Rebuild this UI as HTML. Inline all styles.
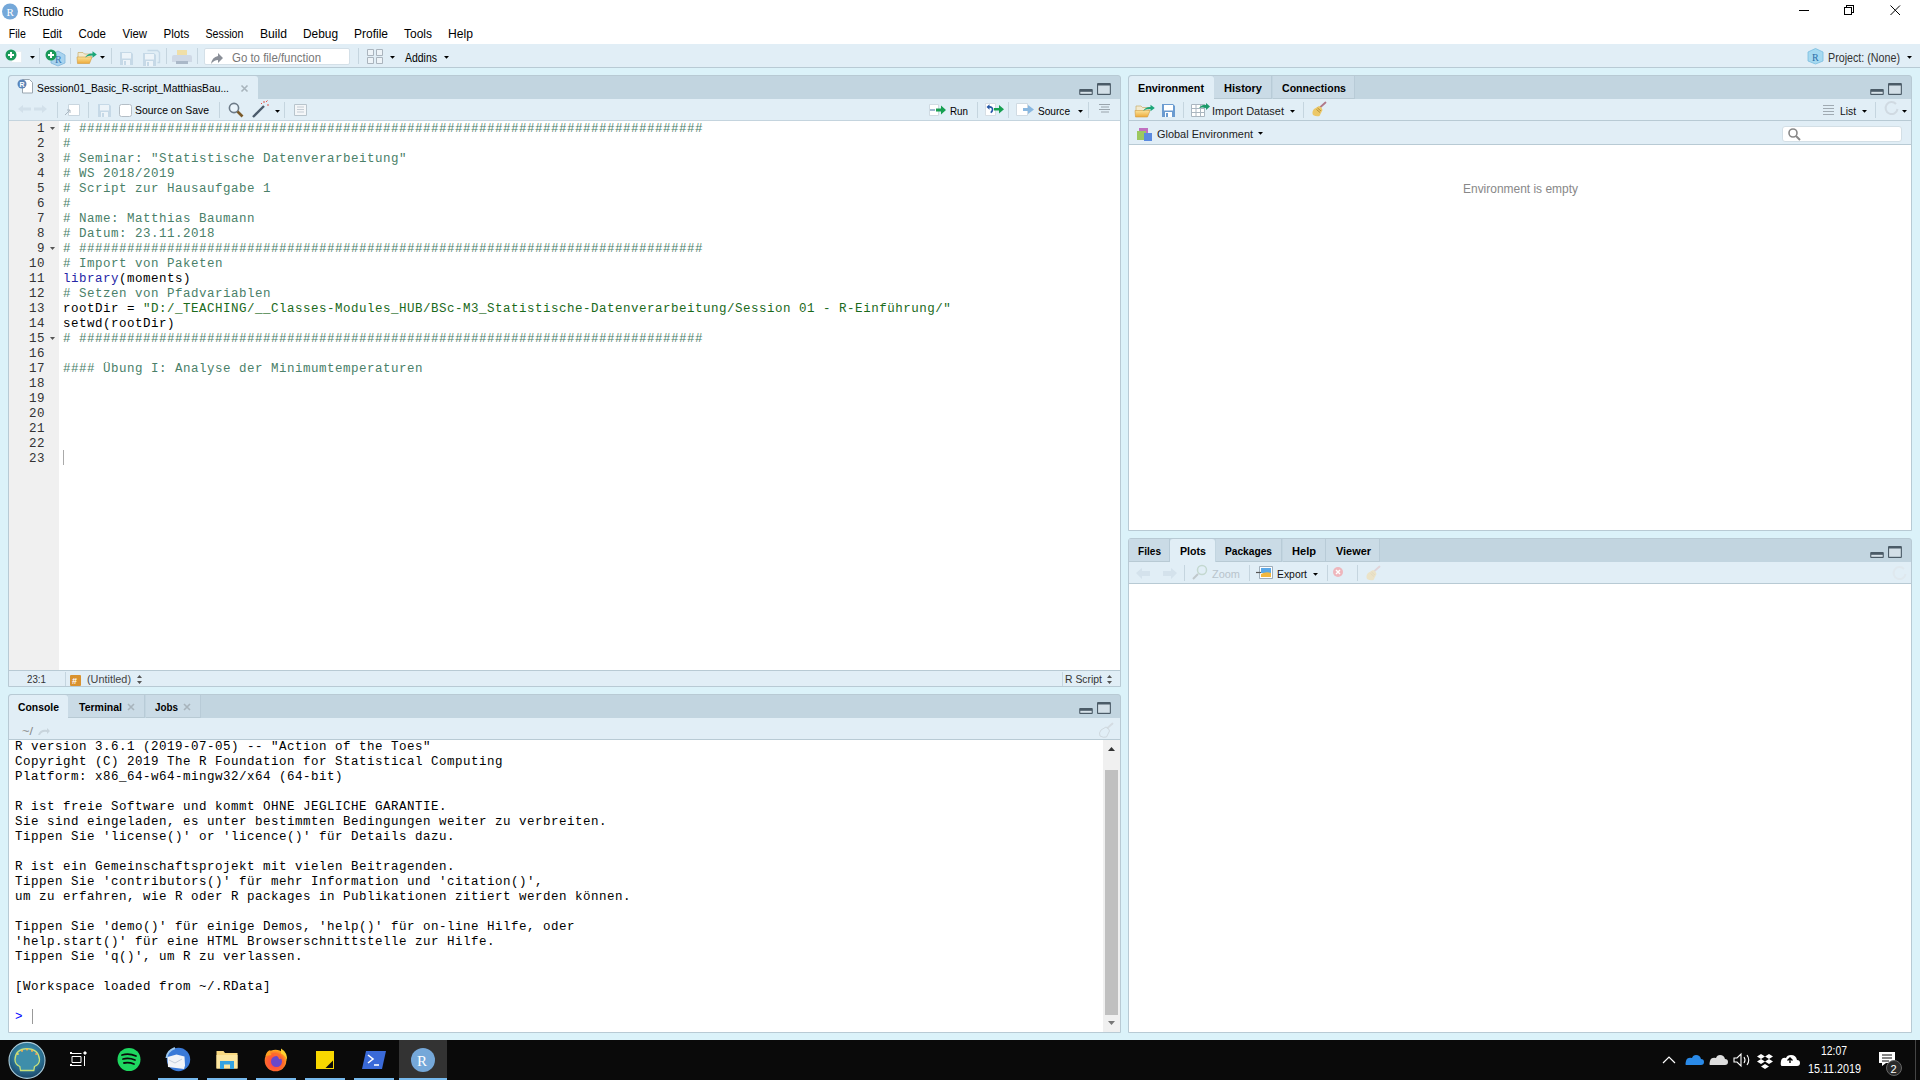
<!DOCTYPE html>
<html><head><meta charset="utf-8">
<style>
*{margin:0;padding:0;box-sizing:border-box}
html,body{width:1920px;height:1080px;overflow:hidden;background:#dbf2f9;font-family:"Liberation Sans",sans-serif;font-size:12px;color:#000}
.a{position:absolute}
.mono{font-family:"Liberation Mono",monospace;font-size:12.5px;letter-spacing:0.5px;line-height:15px;white-space:pre}
.cm{color:#4a7f69}
.st{color:#1b6a1b}
.fn{color:#2626a6}
svg{position:absolute;left:0;top:0}
</style></head><body>
<div class="a" style="left:0px;top:0px;width:1920px;height:44px;background:#fff;"></div>
<div class="a" style="left:0px;top:44px;width:1920px;height:24px;background:#e1eef6;border-bottom:1px solid #b8cad4"></div>
<div class="a" style="left:11px;top:51px;width:11px;height:12px;background:#fff;border:1px solid #e6eef3"></div>
<div class="a" style="left:39px;top:48px;width:1px;height:16px;background:#c5d5df;"></div>
<div class="a" style="left:70px;top:48px;width:1px;height:16px;background:#c5d5df;"></div>
<div class="a" style="left:111px;top:48px;width:1px;height:16px;background:#c5d5df;"></div>
<div class="a" style="left:166px;top:48px;width:1px;height:16px;background:#c5d5df;"></div>
<div class="a" style="left:197px;top:48px;width:1px;height:16px;background:#c5d5df;"></div>
<div class="a" style="left:204px;top:48px;width:146px;height:17px;background:#fff;border:1px solid #d4e0e8;border-radius:2px"></div>
<div class="a" style="left:358px;top:48px;width:1px;height:16px;background:#c5d5df;"></div>
<div class="a" style="left:8px;top:75px;width:1113px;height:612px;background:#c2d5e0;border:1px solid #b8cad4;border-radius:3px 3px 0 0"></div>
<div class="a" style="left:9px;top:76px;width:249px;height:23px;background:#e1eef6;border-radius:3px 3px 0 0"></div>
<div class="a" style="left:9px;top:99px;width:1111px;height:22px;background:#e1eef6;border-bottom:1px solid #c4d4de"></div>
<div class="a" style="left:57px;top:102px;width:1px;height:16px;background:#c5d5df;"></div>
<div class="a" style="left:88px;top:102px;width:1px;height:16px;background:#c5d5df;"></div>
<div class="a" style="left:119px;top:104px;width:13px;height:13px;background:#fff;border:1px solid #b4bec6;border-radius:2.5px"></div>
<div class="a" style="left:219px;top:102px;width:1px;height:16px;background:#c5d5df;"></div>
<div class="a" style="left:284px;top:102px;width:1px;height:16px;background:#c5d5df;"></div>
<div class="a" style="left:977px;top:102px;width:1px;height:16px;background:#c5d5df;"></div>
<div class="a" style="left:1008px;top:102px;width:1px;height:16px;background:#c5d5df;"></div>
<div class="a" style="left:1088px;top:102px;width:1px;height:16px;background:#c5d5df;"></div>
<div class="a" style="left:9px;top:121px;width:50px;height:549px;background:#f0f0f0;"></div>
<div class="a" style="left:59px;top:121px;width:1061px;height:549px;background:#fff;"></div>
<div class="a" style="left:9px;top:670px;width:1111px;height:16px;background:#e1eef6;border-top:1px solid #b8cad4"></div>
<div class="a" style="left:65px;top:672px;width:1px;height:14px;background:#c5d5df;"></div>
<div class="a" style="left:70px;top:675px;width:11px;height:11px;background:#d9922e;border-radius:1px"></div>
<div class="a" style="left:1062px;top:672px;width:1px;height:14px;background:#c5d5df;"></div>
<div class="a" style="left:8px;top:694px;width:1113px;height:339px;background:#c2d5e0;border:1px solid #b8cad4;border-radius:3px 3px 0 0"></div>
<div class="a" style="left:9px;top:695px;width:59px;height:23px;background:#e1eef6;border-radius:3px 3px 0 0"></div>
<div class="a" style="left:68px;top:695px;width:77px;height:23px;background:#cadbe6;border-right:1px solid #b8cbd7;border-bottom:1px solid #b8cad4"></div>
<div class="a" style="left:146px;top:695px;width:55px;height:23px;background:#cadbe6;border-right:1px solid #b8cbd7;border-bottom:1px solid #b8cad4"></div>
<div class="a" style="left:9px;top:718px;width:1111px;height:22px;background:#e1eef6;border-bottom:1px solid #b8cad4"></div>
<div class="a" style="left:9px;top:740px;width:1111px;height:292px;background:#fff;"></div>
<div class="a" style="left:1103px;top:740px;width:17px;height:292px;background:#f0f0f0;"></div>
<div class="a" style="left:1105px;top:770px;width:13px;height:245px;background:#c0c0c0;"></div>
<div class="a" style="left:1128px;top:75px;width:784px;height:456px;background:#c2d5e0;border:1px solid #b8cad4;border-radius:3px 3px 0 0"></div>
<div class="a" style="left:1129px;top:76px;width:85px;height:23px;background:#e1eef6;border-radius:3px 3px 0 0"></div>
<div class="a" style="left:1214px;top:76px;width:58px;height:23px;background:#cadbe6;border-right:1px solid #b8cbd7;border-bottom:1px solid #b8cad4"></div>
<div class="a" style="left:1273px;top:76px;width:82px;height:23px;background:#cadbe6;border-right:1px solid #b8cbd7;border-bottom:1px solid #b8cad4"></div>
<div class="a" style="left:1129px;top:99px;width:782px;height:22px;background:#e1eef6;border-bottom:1px solid #b8cad4"></div>
<div class="a" style="left:1183px;top:102px;width:1px;height:16px;background:#c5d5df;"></div>
<div class="a" style="left:1303px;top:102px;width:1px;height:16px;background:#c5d5df;"></div>
<div class="a" style="left:1875px;top:102px;width:1px;height:16px;background:#c5d5df;"></div>
<div class="a" style="left:1129px;top:121px;width:782px;height:24px;background:#e1eef6;border-bottom:1px solid #b8cad4"></div>
<div class="a" style="left:1782px;top:126px;width:120px;height:16px;background:#fff;border:1px solid #d3dfe6;border-radius:3px"></div>
<div class="a" style="left:1129px;top:145px;width:782px;height:385px;background:#fff;"></div>
<div class="a" style="left:1128px;top:538px;width:784px;height:495px;background:#c2d5e0;border:1px solid #b8cad4;border-radius:3px 3px 0 0"></div>
<div class="a" style="left:1129px;top:539px;width:41px;height:23px;background:#cadbe6;border-right:1px solid #b8cbd7;border-bottom:1px solid #b8cad4"></div>
<div class="a" style="left:1170px;top:539px;width:45px;height:23px;background:#e1eef6;border-radius:3px 3px 0 0"></div>
<div class="a" style="left:1216px;top:539px;width:66px;height:23px;background:#cadbe6;border-right:1px solid #b8cbd7;border-bottom:1px solid #b8cad4"></div>
<div class="a" style="left:1283px;top:539px;width:43px;height:23px;background:#cadbe6;border-right:1px solid #b8cbd7;border-bottom:1px solid #b8cad4"></div>
<div class="a" style="left:1326px;top:539px;width:54px;height:23px;background:#cadbe6;border-right:1px solid #b8cbd7;border-bottom:1px solid #b8cad4"></div>
<div class="a" style="left:1129px;top:562px;width:782px;height:22px;background:#e1eef6;border-bottom:1px solid #b8cad4"></div>
<div class="a" style="left:1184px;top:565px;width:1px;height:16px;background:#c5d5df;"></div>
<div class="a" style="left:1249px;top:565px;width:1px;height:16px;background:#c5d5df;"></div>
<div class="a" style="left:1327px;top:565px;width:1px;height:16px;background:#c5d5df;"></div>
<div class="a" style="left:1357px;top:565px;width:1px;height:16px;background:#c5d5df;"></div>
<div class="a" style="left:1129px;top:584px;width:782px;height:448px;background:#fff;"></div>
<div class="a" style="left:0px;top:1040px;width:1920px;height:40px;background:#0a0a0a;"></div>
<div class="a" style="left:316px;top:1051px;width:18px;height:18px;background:#f8d800;"></div>
<div class="a" style="left:399px;top:1040px;width:48px;height:40px;background:#333;"></div>
<div class="a" style="left:158px;top:1078px;width:40px;height:2px;background:#76b9ed;"></div>
<div class="a" style="left:207px;top:1078px;width:40px;height:2px;background:#76b9ed;"></div>
<div class="a" style="left:256px;top:1078px;width:40px;height:2px;background:#76b9ed;"></div>
<div class="a" style="left:305px;top:1078px;width:40px;height:2px;background:#76b9ed;"></div>
<div class="a" style="left:354px;top:1078px;width:40px;height:2px;background:#76b9ed;"></div>
<div class="a" style="left:399px;top:1078px;width:48px;height:2px;background:#76b9ed;"></div>
<div class="a" style="left:1915px;top:1040px;width:1px;height:40px;background:#444;"></div>
<div class="a mono" style="left:9px;top:122px;width:36px;text-align:right;color:#333">1
2
3
4
5
6
7
8
9
10
11
12
13
14
15
16
17
18
19
20
21
22
23</div>
<div class="a mono" style="left:63px;top:122px;color:#000"><span class="cm"># ##############################################################################</span>
<span class="cm">#</span>
<span class="cm"># Seminar: "Statistische Datenverarbeitung"</span>
<span class="cm"># WS 2018/2019</span>
<span class="cm"># Script zur Hausaufgabe 1</span>
<span class="cm">#</span>
<span class="cm"># Name: Matthias Baumann</span>
<span class="cm"># Datum: 23.11.2018</span>
<span class="cm"># ##############################################################################</span>
<span class="cm"># Import von Paketen</span>
<span class="fn">library</span>(moments)
<span class="cm"># Setzen von Pfadvariablen</span>
rootDir = <span class="st">"D:/_TEACHING/__Classes-Modules_HUB/BSc-M3_Statistische-Datenverarbeitung/Session 01 - R-Einführung/"</span>
setwd(rootDir)
<span class="cm"># ##############################################################################</span>

<span class="cm">#### Übung I: Analyse der Minimumtemperaturen</span></div>
<div class="a" style="left:63px;top:450px;width:1px;height:15px;background:#aaa"></div>
<div class="a mono" style="left:15px;top:740px;color:#000">R version 3.6.1 (2019-07-05) -- &quot;Action of the Toes&quot;
Copyright (C) 2019 The R Foundation for Statistical Computing
Platform: x86_64-w64-mingw32/x64 (64-bit)

R ist freie Software und kommt OHNE JEGLICHE GARANTIE.
Sie sind eingeladen, es unter bestimmten Bedingungen weiter zu verbreiten.
Tippen Sie &#x27;license()&#x27; or &#x27;licence()&#x27; für Details dazu.

R ist ein Gemeinschaftsprojekt mit vielen Beitragenden.
Tippen Sie &#x27;contributors()&#x27; für mehr Information und &#x27;citation()&#x27;,
um zu erfahren, wie R oder R packages in Publikationen zitiert werden können.

Tippen Sie &#x27;demo()&#x27; für einige Demos, &#x27;help()&#x27; für on-line Hilfe, oder
&#x27;help.start()&#x27; für eine HTML Browserschnittstelle zur Hilfe.
Tippen Sie &#x27;q()&#x27;, um R zu verlassen.

[Workspace loaded from ~/.RData]

<span style="color:#0000ff">&gt;</span> </div>
<div class="a" style="left:32px;top:1009px;width:1px;height:15px;background:#999"></div>
<svg width="1920" height="1080" viewBox="0 0 1920 1080">
<circle cx="10" cy="11.5" r="8" fill="#75a8d9"/>
<text x="6.5" y="15.5" font-family="Liberation Serif" font-size="11" fill="#fff">R</text>
<text x="23.5" y="15.8" font-family="Liberation Sans" font-size="12.6" font-weight="normal" fill="#000" textLength="40.00" lengthAdjust="spacingAndGlyphs">RStudio</text>
<path d="M1799 10.5h10" stroke="#000" stroke-width="1" shape-rendering="crispEdges"/>
<path d="M1844.5 7.5h7v7h-7z M1846.5 7.5v-2h7v7h-2" stroke="#000" stroke-width="1" fill="none" shape-rendering="crispEdges"/>
<path d="M1890.5 5.5l9.5 9.5 M1900 5.5l-9.5 9.5" stroke="#000" stroke-width="1"/>
<text x="8.8" y="37.5" font-family="Liberation Sans" font-size="12.2" font-weight="normal" fill="#000" textLength="17.00" lengthAdjust="spacingAndGlyphs">File</text>
<text x="42.5" y="37.5" font-family="Liberation Sans" font-size="12.2" font-weight="normal" fill="#000" textLength="19.50" lengthAdjust="spacingAndGlyphs">Edit</text>
<text x="78.5" y="37.5" font-family="Liberation Sans" font-size="12.2" font-weight="normal" fill="#000" textLength="27.50" lengthAdjust="spacingAndGlyphs">Code</text>
<text x="122.5" y="37.5" font-family="Liberation Sans" font-size="12.2" font-weight="normal" fill="#000" textLength="24.50" lengthAdjust="spacingAndGlyphs">View</text>
<text x="163.4" y="37.5" font-family="Liberation Sans" font-size="12.2" font-weight="normal" fill="#000" textLength="25.80" lengthAdjust="spacingAndGlyphs">Plots</text>
<text x="205.5" y="37.5" font-family="Liberation Sans" font-size="12.2" font-weight="normal" fill="#000" textLength="38.00" lengthAdjust="spacingAndGlyphs">Session</text>
<text x="260" y="37.5" font-family="Liberation Sans" font-size="12.2" font-weight="normal" fill="#000" textLength="27.00" lengthAdjust="spacingAndGlyphs">Build</text>
<text x="303" y="37.5" font-family="Liberation Sans" font-size="12.2" font-weight="normal" fill="#000" textLength="35.00" lengthAdjust="spacingAndGlyphs">Debug</text>
<text x="354" y="37.5" font-family="Liberation Sans" font-size="12.2" font-weight="normal" fill="#000" textLength="34.00" lengthAdjust="spacingAndGlyphs">Profile</text>
<text x="404" y="37.5" font-family="Liberation Sans" font-size="12.2" font-weight="normal" fill="#000" textLength="28.00" lengthAdjust="spacingAndGlyphs">Tools</text>
<text x="448" y="37.5" font-family="Liberation Sans" font-size="12.2" font-weight="normal" fill="#000" textLength="25.00" lengthAdjust="spacingAndGlyphs">Help</text>
<circle cx="11" cy="55" r="5.5" fill="#1a9a5a"/><path d="M8 55h6M11 52v6" stroke="#fff" stroke-width="2"/>
<path d="M30 56h5l-2.5 2.75z" fill="#000"/>
<path d="M51 55l7-4 7 4v8l-7 3-7-3z" fill="#a9d3ef" stroke="#7fb5da" stroke-width="0.8"/>
<text x="55" y="63" font-family="Liberation Serif" font-size="10" fill="#3a76b0">R</text>
<circle cx="51" cy="55" r="5.5" fill="#1a9a5a"/><path d="M48 55h6M51 52v6" stroke="#fff" stroke-width="2"/>
<defs><linearGradient id="fg77" x1="0" y1="0" x2="0" y2="1"><stop offset="0" stop-color="#fae39a"/><stop offset="1" stop-color="#eeaa3a"/></linearGradient></defs>
<path d="M78 52.5h5l1.5 1.5h6.5v5h-13z" fill="#f2ead0" stroke="#c9ad6a" stroke-width="0.7"/>
<path d="M77 57h15l-2.5 6.5h-12z" fill="url(#fg77)" stroke="#d09a40" stroke-width="0.6"/>
<path d="M85 57.5q3-4.5 7.5-4v-2.3l4.3 3.3-4.3 3.3v-2.3q-4.5-0.3-7.5 2z" fill="#1ba678"/>
<path d="M100 56h5l-2.5 2.75z" fill="#000"/>
<path d="M120 52h11l2 2v11h-13z" fill="#c6d9e7"/><path d="M122 53h9v5.5h-9z M123 60h7v5h-7z" fill="#edf4f9"/><path d="M124 61h2v4h-2z" fill="#c6d9e7"/>
<path d="M147.5 50.5h10l2 2v10h-2" fill="none" stroke="#c6d9e7" stroke-width="1.4"/>
<path d="M143 53h11l2 2v11h-13z" fill="#c6d9e7"/><path d="M145 54h9v5.5h-9z M146 61h7v5h-7z" fill="#edf4f9"/><path d="M147 62h2v4h-2z" fill="#c6d9e7"/>
<path d="M177 50h10v5h-10z" fill="#f0dfa8"/><path d="M174 55h16q2 0 2 2v5h-20v-5q0-2 2-2z" fill="#cfd9e6"/><path d="M176 61h12v3h-12z" fill="#aab8c8"/>
<path d="M211 64q1-7 7-8v-3l5 5-5 5v-3q-4 0-7 4z" fill="#8a8f98"/>
<text x="232" y="62.3" font-family="Liberation Sans" font-size="12" font-weight="normal" fill="#777" textLength="89.00" lengthAdjust="spacingAndGlyphs">Go to file/function</text>
<path d="M367.5 49.5h6v6h-6z M376.5 49.5h6v6h-6z M367.5 57.5h6v6h-6z M376.5 57.5h6v6h-6z" stroke="#aab4bd" fill="#eef4f8"/>
<path d="M390 56h5l-2.5 2.75z" fill="#000"/>
<text x="405" y="62.3" font-family="Liberation Sans" font-size="12" font-weight="normal" fill="#000" textLength="32.00" lengthAdjust="spacingAndGlyphs">Addins</text>
<path d="M444 56h5l-2.5 2.75z" fill="#000"/>
<path d="M1808 52l7.5-3.5 7.5 3.5v9l-7.5 3-7.5-3z" fill="#a6d9f0" stroke="#78bde0" stroke-width="0.8"/>
<text x="1812" y="61" font-family="Liberation Serif" font-size="10" fill="#2a6ea8">R</text>
<text x="1828" y="61.5" font-family="Liberation Sans" font-size="12" font-weight="normal" fill="#333" textLength="72.00" lengthAdjust="spacingAndGlyphs">Project: (None)</text>
<path d="M1907 56h5l-2.5 2.75z" fill="#000"/>
<rect x="1079.2" y="89.1" width="13.6" height="5.8" rx="1" fill="#4b5b67"/><rect x="1080.3" y="91.8" width="11.4" height="2" fill="#d8e3ea"/>
<rect x="1097.0" y="82.9" width="13.9" height="12" rx="1" fill="#4b5b67"/><rect x="1098.1" y="85.5" width="11.7" height="8.3" fill="#d3dfe7"/>
<text x="37" y="92" font-family="Liberation Sans" font-size="11.6" font-weight="normal" fill="#000" textLength="192.00" lengthAdjust="spacingAndGlyphs">Session01_Basic_R-script_MatthiasBau...</text>
<path d="M241.5 85.5l6 6 M247.5 85.5l-6 6" stroke="#a8b4bc" stroke-width="1.6"/>
<path d="M22.5 79.5h7l3 3v10.5h-10z" fill="#fff" stroke="#9aa6b0"/>
<circle cx="22" cy="84" r="4.5" fill="#5a84b8"/><text x="19.5" y="87" font-family="Liberation Sans" font-weight="bold" font-size="7" fill="#fff">R</text>
<path d="M18 109l5-4v2.5h8v3h-8v2.5z M47 109l-5-4v2.5h-8v3h8v2.5z" fill="#d2e0ea"/>
<path d="M68.5 104.5h11v11h-11z" fill="#fff" stroke="#c9d6df"/><path d="M65 115l5-5m-3 0h3v3" stroke="#aab7c2" fill="none"/>
<path d="M98 104h11l2 2v11h-13z" fill="#c6d9e7"/><path d="M100 105h9v5.5h-9z M101 112h7v5h-7z" fill="#edf4f9"/><path d="M102 113h2v4h-2z" fill="#c6d9e7"/>
<text x="135" y="114" font-family="Liberation Sans" font-size="11.6" font-weight="normal" fill="#000" textLength="74.00" lengthAdjust="spacingAndGlyphs">Source on Save</text>
<circle cx="234" cy="108" r="4.6" fill="#eaf4fb" stroke="#6d7b88" stroke-width="1.6"/><path d="M237.5 111.5l5 5" stroke="#7a5a2a" stroke-width="2.6"/>
<path d="M253 117l11-11" stroke="#4a5a6a" stroke-width="2.4"/><path d="M264 103v-2 M267 105h2 M266 102l1.5-1.5 M262 104l-1-1" stroke="#e0554a" stroke-width="1"/>
<path d="M275 110h5l-2.5 2.75z" fill="#000"/>
<path d="M294.5 104.5h12v11h-12z" fill="#f4f6f8" stroke="#b8c4cc"/><path d="M297 107h7M297 109.5h7M297 112h7" stroke="#c4ccd4"/>
<path d="M929.5 104.5h9v11h-9z" fill="#fff" stroke="#d0dbe3"/><path d="M930 110h5" stroke="#9fb8d0" stroke-width="2"/><path d="M936 108.5h5v-3l5 4.5-5 4.5v-3h-5z" fill="#16a050"/>
<text x="950" y="114.5" font-family="Liberation Sans" font-size="11.6" font-weight="normal" fill="#000" textLength="18.00" lengthAdjust="spacingAndGlyphs">Run</text>
<path d="M985.5 103.5h10v12h-10z" fill="#fff" stroke="#d6dee4"/><path d="M989 107q3.8-0.3 3.5 2.8q-0.3 1.8-1.8 2.8" stroke="#2456a6" stroke-width="1.7" fill="none"/><path d="M986.5 107l3-2.8v5.6z" fill="#2456a6"/><path d="M994 108h5v-3l5 4.2-5 4.3v-3h-5z" fill="#16a050"/>
<path d="M1016.5 103.5h11v12h-11z" fill="#fff" stroke="#d0dbe3"/><path d="M1023 108h5v-3l6 4.5-6 4.5v-3h-5z" fill="#8ab8e0"/>
<text x="1038" y="114.5" font-family="Liberation Sans" font-size="11.6" font-weight="normal" fill="#000" textLength="32.00" lengthAdjust="spacingAndGlyphs">Source</text>
<path d="M1078 110h5l-2.5 2.75z" fill="#000"/>
<path d="M1099 104.5h11 M1101 107h8 M1099 109.5h11 M1101 112h8" stroke="#9aa4ac"/>
<text x="27" y="683" font-family="Liberation Sans" font-size="11.6" font-weight="normal" fill="#333" textLength="19.00" lengthAdjust="spacingAndGlyphs">23:1</text>
<text x="72" y="684" font-family="Liberation Sans" font-size="9" font-weight="bold" fill="#fff">#</text>
<text x="87" y="683" font-family="Liberation Sans" font-size="11.6" font-weight="normal" fill="#444" textLength="44.00" lengthAdjust="spacingAndGlyphs">(Untitled)</text>
<path d="M137 678l2.5-3 2.5 3z M137 681l2.5 3 2.5-3z" fill="#555"/>
<text x="1065" y="683" font-family="Liberation Sans" font-size="11.6" font-weight="normal" fill="#333" textLength="37.00" lengthAdjust="spacingAndGlyphs">R Script</text>
<path d="M1107 678l2.5-3 2.5 3z M1107 681l2.5 3 2.5-3z" fill="#555"/>
<text x="18" y="711" font-family="Liberation Sans" font-size="11.6" font-weight="bold" fill="#000" textLength="41.00" lengthAdjust="spacingAndGlyphs">Console</text>
<text x="79" y="711" font-family="Liberation Sans" font-size="11.6" font-weight="bold" fill="#000" textLength="43.00" lengthAdjust="spacingAndGlyphs">Terminal</text>
<path d="M128 704l6 6 M134 704l-6 6" stroke="#a8b4bc" stroke-width="1.6"/>
<text x="155" y="711" font-family="Liberation Sans" font-size="11.6" font-weight="bold" fill="#000" textLength="23.00" lengthAdjust="spacingAndGlyphs">Jobs</text>
<path d="M184 704l6 6 M190 704l-6 6" stroke="#a8b4bc" stroke-width="1.6"/>
<rect x="1079.2" y="708.1" width="13.6" height="5.8" rx="1" fill="#4b5b67"/><rect x="1080.3" y="710.8" width="11.4" height="2" fill="#d8e3ea"/>
<rect x="1097.0" y="701.9" width="13.9" height="12" rx="1" fill="#4b5b67"/><rect x="1098.1" y="704.5" width="11.7" height="8.3" fill="#d3dfe7"/>
<text x="22" y="735" font-family="Liberation Sans" font-size="11" font-weight="normal" fill="#888" textLength="11.00" lengthAdjust="spacingAndGlyphs">~/</text>
<path d="M38 735q2-6 9-5v-2l3 3-3 3v-2q-5-1-7 3z" fill="#c8d4dc"/>
<path d="M1112.5 723.5L1107.5 728" stroke="#d4dce2" stroke-width="1.8" stroke-linecap="round"/>
<path d="M1106 727q3 1 3.5 4l-3 6q-3 1-6.5-1q-1.5-3 1-6z" fill="none" stroke="#cfd8de" stroke-width="1"/>
<path d="M1108 751h7l-3.5-4z" fill="#333"/>
<path d="M1108 1021h7l-3.5 4z" fill="#777"/>
<text x="1138" y="92" font-family="Liberation Sans" font-size="11.6" font-weight="bold" fill="#000" textLength="66.00" lengthAdjust="spacingAndGlyphs">Environment</text>
<text x="1224" y="92" font-family="Liberation Sans" font-size="11.6" font-weight="bold" fill="#000" textLength="38.00" lengthAdjust="spacingAndGlyphs">History</text>
<text x="1282" y="92" font-family="Liberation Sans" font-size="11.6" font-weight="bold" fill="#000" textLength="64.00" lengthAdjust="spacingAndGlyphs">Connections</text>
<rect x="1870.2" y="89.1" width="13.6" height="5.8" rx="1" fill="#4b5b67"/><rect x="1871.3" y="91.8" width="11.4" height="2" fill="#d8e3ea"/>
<rect x="1888.0" y="82.9" width="13.9" height="12" rx="1" fill="#4b5b67"/><rect x="1889.1" y="85.5" width="11.7" height="8.3" fill="#d3dfe7"/>
<defs><linearGradient id="fg1135" x1="0" y1="0" x2="0" y2="1"><stop offset="0" stop-color="#fae39a"/><stop offset="1" stop-color="#eeaa3a"/></linearGradient></defs>
<path d="M1136 106.0h5l1.5 1.5h6.5v5h-13z" fill="#f2ead0" stroke="#c9ad6a" stroke-width="0.7"/>
<path d="M1135 110.5h15l-2.5 6.5h-12z" fill="url(#fg1135)" stroke="#d09a40" stroke-width="0.6"/>
<path d="M1143 111.0q3-4.5 7.5-4v-2.3l4.3 3.3-4.3 3.3v-2.3q-4.5-0.3-7.5 2z" fill="#1ba678"/>
<path d="M1162 104h11l2 2v11h-13z" fill="#6b9bd0"/><path d="M1164 105h9v5.5h-9z M1165 112h7v5h-7z" fill="#fff"/><path d="M1166 113h2v4h-2z" fill="#6b9bd0"/>
<path d="M1191.5 104.5h13v12h-13z M1191.5 108.5h13 M1191.5 112.5h13 M1196 104.5v12 M1200.5 104.5v12" stroke="#aab6c0" fill="#fff"/>
<path d="M1199 108q3-4 7-3v-2l4 3.5-4 3.5v-2q-4-1-7 0z" fill="#1c9a6a"/>
<text x="1212" y="114.5" font-family="Liberation Sans" font-size="11.6" font-weight="normal" fill="#222" textLength="72.00" lengthAdjust="spacingAndGlyphs">Import Dataset</text>
<path d="M1290 110h5l-2.5 2.75z" fill="#000"/>
<path d="M1325.5 102.5L1320.5 107" stroke="#b07888" stroke-width="1.8" stroke-linecap="round"/>
<path d="M1319 106q3 1 3.5 4l-3 6q-3 1-6.5-1q-1.5-3 1-6z" fill="#ecc868"/>
<path d="M1317.5 108l3.5 3 M1316.5 109.5l3.5 3" stroke="#b08a30" stroke-width="0.9"/>
<path d="M1823 105.5h11 M1823 108.5h11 M1823 111.5h11 M1823 114.5h11" stroke="#a0aab2"/>
<text x="1840" y="114.5" font-family="Liberation Sans" font-size="11.6" font-weight="normal" fill="#111" textLength="16.00" lengthAdjust="spacingAndGlyphs">List</text>
<path d="M1862 110h5l-2.5 2.75z" fill="#000"/>
<path d="M1896 104a6 6 0 1 0 1.5 5" fill="none" stroke="#d0dae2" stroke-width="2"/>
<path d="M1902 110h5l-2.5 2.75z" fill="#000"/>
<path d="M1139 128h9v9h-9z" fill="#c070c0"/><path d="M1137 131h9v9h-9z" fill="#9cc860"/><path d="M1144 133h8v8h-8z" fill="#5a8ae0"/>
<text x="1157" y="137.5" font-family="Liberation Sans" font-size="11.6" font-weight="normal" fill="#222" textLength="96.00" lengthAdjust="spacingAndGlyphs">Global Environment</text>
<path d="M1258 132h5l-2.5 2.75z" fill="#000"/>
<circle cx="1793" cy="133" r="4" fill="none" stroke="#888" stroke-width="1.6"/><path d="M1796 136l4 4" stroke="#888" stroke-width="2"/>
<text x="1463" y="193" font-family="Liberation Sans" font-size="12" font-weight="normal" fill="#888" textLength="115.00" lengthAdjust="spacingAndGlyphs">Environment is empty</text>
<text x="1138" y="555" font-family="Liberation Sans" font-size="11.6" font-weight="bold" fill="#000" textLength="23.00" lengthAdjust="spacingAndGlyphs">Files</text>
<text x="1180" y="555" font-family="Liberation Sans" font-size="11.6" font-weight="bold" fill="#000" textLength="26.00" lengthAdjust="spacingAndGlyphs">Plots</text>
<text x="1225" y="555" font-family="Liberation Sans" font-size="11.6" font-weight="bold" fill="#000" textLength="47.00" lengthAdjust="spacingAndGlyphs">Packages</text>
<text x="1292" y="555" font-family="Liberation Sans" font-size="11.6" font-weight="bold" fill="#000" textLength="24.00" lengthAdjust="spacingAndGlyphs">Help</text>
<text x="1336" y="555" font-family="Liberation Sans" font-size="11.6" font-weight="bold" fill="#000" textLength="35.00" lengthAdjust="spacingAndGlyphs">Viewer</text>
<rect x="1870.2" y="552.1" width="13.6" height="5.8" rx="1" fill="#4b5b67"/><rect x="1871.3" y="554.8" width="11.4" height="2" fill="#d8e3ea"/>
<rect x="1888.0" y="545.9" width="13.9" height="12" rx="1" fill="#4b5b67"/><rect x="1889.1" y="548.5" width="11.7" height="8.3" fill="#d3dfe7"/>
<path d="M1136 573l6-5v3h8v5h-8v3z M1177 573l-6-5v3h-8v5h8v3z" fill="#d4e2ec"/>
<circle cx="1202" cy="570" r="4.5" fill="none" stroke="#c4d8d0" stroke-width="1.5"/><path d="M1198 574l-5 5" stroke="#c0c8cc" stroke-width="2"/>
<text x="1212" y="578" font-family="Liberation Sans" font-size="11.6" font-weight="normal" fill="#b8c4cc" textLength="28.00" lengthAdjust="spacingAndGlyphs">Zoom</text>
<path d="M1259.5 566.5h13v12h-13z" fill="#fff" stroke="#8a9aa8" stroke-width="0.8"/><path d="M1261 568h10v5h-10z" fill="#5aa8e8"/><path d="M1261 574q5-3 10-1v4h-10z" fill="#f2b840"/><path d="M1256 572.5h5" stroke="#555" stroke-width="1.2"/>
<text x="1277" y="578" font-family="Liberation Sans" font-size="11.6" font-weight="normal" fill="#111" textLength="30.00" lengthAdjust="spacingAndGlyphs">Export</text>
<path d="M1313 573h5l-2.5 2.75z" fill="#000"/>
<circle cx="1338" cy="572" r="5" fill="#eeb6bc"/><path d="M1336 570l4 4M1340 570l-4 4" stroke="#fff" stroke-width="1.4"/>
<path d="M1379.5 566.5L1374.5 571" stroke="#e0d4d8" stroke-width="1.8" stroke-linecap="round"/>
<path d="M1373 570q3 1 3.5 4l-3 6q-3 1-6.5-1q-1.5-3 1-6z" fill="#ebe3c8"/>
<path d="M1371.5 572l3.5 3 M1370.5 573.5l3.5 3" stroke="#e2d8c0" stroke-width="0.9"/>
<path d="M1904 569a6 6 0 1 0 1.5 5" fill="none" stroke="#dfe8ee" stroke-width="2"/>
<defs><radialGradient id="shg" cx="0.5" cy="0.35" r="0.7"><stop offset="0" stop-color="#4aa0b8"/><stop offset="0.6" stop-color="#2a6e90"/><stop offset="1" stop-color="#173e60"/></radialGradient><radialGradient id="ffg" cx="0.45" cy="0.6" r="0.6"><stop offset="0" stop-color="#ff3a50"/><stop offset="0.7" stop-color="#ff6a2a"/><stop offset="1" stop-color="#ffb020"/></radialGradient></defs>
<circle cx="27" cy="1060.4" r="18" fill="url(#shg)" stroke="#a9cbd9" stroke-width="1.1"/>
<path d="M20.5 1070.5L19.8 1066.5Q15 1064.5 15 1059.5Q15.5 1049 27 1048.7Q38.5 1049 39.5 1059.5Q39.5 1064.5 34.5 1066.5L33.8 1070.5Z" fill="#3e8eaa" stroke="#c9e27a" stroke-width="1.3"/>
<circle cx="22" cy="1050.8" r="1.1" fill="#f0b050"/><circle cx="27" cy="1049.5" r="1.1" fill="#f0b050"/><circle cx="32" cy="1050.8" r="1.1" fill="#f0b050"/><circle cx="17.8" cy="1054" r="1.1" fill="#e8d060"/><circle cx="36.2" cy="1054" r="1.1" fill="#f09a60"/>
<path d="M70 1052h2v2h-2z M70 1066h2v-2h-2z" fill="#fff"/><path d="M70.5 1053.5h11 M70.5 1065.5h11 M72 1056.5h9v6h-9z" stroke="#fff" fill="none"/><path d="M84 1052h2v2h-2z M84.5 1056v10" stroke="#fff" fill="#fff"/>
<circle cx="129" cy="1059.5" r="11.5" fill="#1ed760"/><path d="M122 1055q7-2 14 1 M123 1059q6-1.5 12 1 M124 1063q5-1 10 1" stroke="#0a0a0a" stroke-width="1.8" fill="none" stroke-linecap="round"/>
<circle cx="178.5" cy="1059.5" r="11.7" fill="#3a7ad8"/><path d="M175 1048q-8 3-8.5 10" stroke="#9cc8f0" stroke-width="2" fill="none"/>
<path d="M167.5 1057l9-2.5 8 2 0.5 9-1 3.5-16-2z" fill="#f2f4f8"/><path d="M169 1060l6 3 7-4" stroke="#b8c4d4" stroke-width="0.8" fill="none"/>
<path d="M216.5 1051h7l1.5 2h12.5v15.5h-21z" fill="#f8d880"/><path d="M216.5 1055h21v13.5h-21z" fill="#fce6a0"/><path d="M220 1061h14v8h-4v-4.5h-6v4.5h-4z" fill="#35a3e2"/>
<circle cx="275.5" cy="1060.5" r="10.8" fill="url(#ffg)"/><circle cx="276.5" cy="1061.5" r="5.5" fill="#6a48c8"/><path d="M274 1055q5-1 6 4" stroke="#ff6a30" stroke-width="2" fill="none"/>
<path d="M281 1048.5q7 4 6 13q-1 -6-6-8z" fill="#ffd030"/><path d="M265.5 1056q1-5 5-6q-1 3 1 5z" fill="#ffa020"/>
<path d="M333 1060.5v7.5h-7.5z" fill="#0a0a0a"/>
<path d="M366 1051h20l-4 18h-20z" fill="#3a6ad8"/><path d="M368 1055l5 4-5 4" stroke="#fff" stroke-width="1.6" fill="none"/><path d="M374 1065h5" stroke="#fff" stroke-width="1.6"/>
<circle cx="423" cy="1060" r="12" fill="#75a8d9"/><text x="417" y="1065.5" font-family="Liberation Serif" font-size="15" fill="#fff">R</text>
<path d="M1663 1063l6-6 6 6" stroke="#fff" stroke-width="1.2" fill="none"/>
<path d="M1686 1065h15q3 0 3-3q0-3-3-3q-1-4-5-4q-3 0-4 3q-5-1-6 3q-1 4 0 4z" fill="#2a8ae8"/>
<path d="M1710 1065h15q3 0 3-3q0-3-3-3q-1-4-5-4q-3 0-4 3q-5-1-6 3q-1 4 0 4z" fill="#ddd"/>
<path d="M1734 1058h3l4-4v12l-4-4h-3z" fill="none" stroke="#fff" stroke-width="1.1"/><path d="M1744 1057q2 3 0 6 M1747 1055q3.5 5 0 10" stroke="#fff" stroke-width="1.1" fill="none"/>
<path d="M1761 1054l4 2.5-4 2.5-4-2.5z M1769 1054l4 2.5-4 2.5-4-2.5z M1761 1059l4 2.5-4 2.5-4-2.5z M1769 1059l4 2.5-4 2.5-4-2.5z M1765 1064l4 2.5-4 2.5-4-2.5z" fill="#fff"/>
<path d="M1782 1066h15q3 0 3-3q0-3-3-3q-1-5-6-5q-4 0-5 3q-4-1-5 3q-1 5 1 5z" fill="#fff"/><path d="M1790 1063v-5m-2.5 2.5l2.5-2.5 2.5 2.5" stroke="#000" stroke-width="1.4" fill="none"/>
<text x="1821" y="1055" font-family="Liberation Sans" font-size="12" font-weight="normal" fill="#fff" textLength="26.00" lengthAdjust="spacingAndGlyphs">12:07</text>
<text x="1808" y="1073" font-family="Liberation Sans" font-size="12" font-weight="normal" fill="#fff" textLength="53.00" lengthAdjust="spacingAndGlyphs">15.11.2019</text>
<path d="M1879 1052h16v11h-9l-4 3v-3h-3z" fill="#fff"/><path d="M1882 1055h10M1882 1058h10M1882 1061h7" stroke="#0a0a0a"/>
<circle cx="1894" cy="1068" r="7.5" fill="#2a2a2a" stroke="#666" stroke-width="1"/><text x="1890.5" y="1072.5" font-family="Liberation Sans" font-size="11" fill="#fff">2</text>
<path d="M50 127h5l-2.5 3z" fill="#555"/>
<path d="M50 247h5l-2.5 3z" fill="#555"/>
<path d="M50 337h5l-2.5 3z" fill="#555"/>
</svg>
</body></html>
